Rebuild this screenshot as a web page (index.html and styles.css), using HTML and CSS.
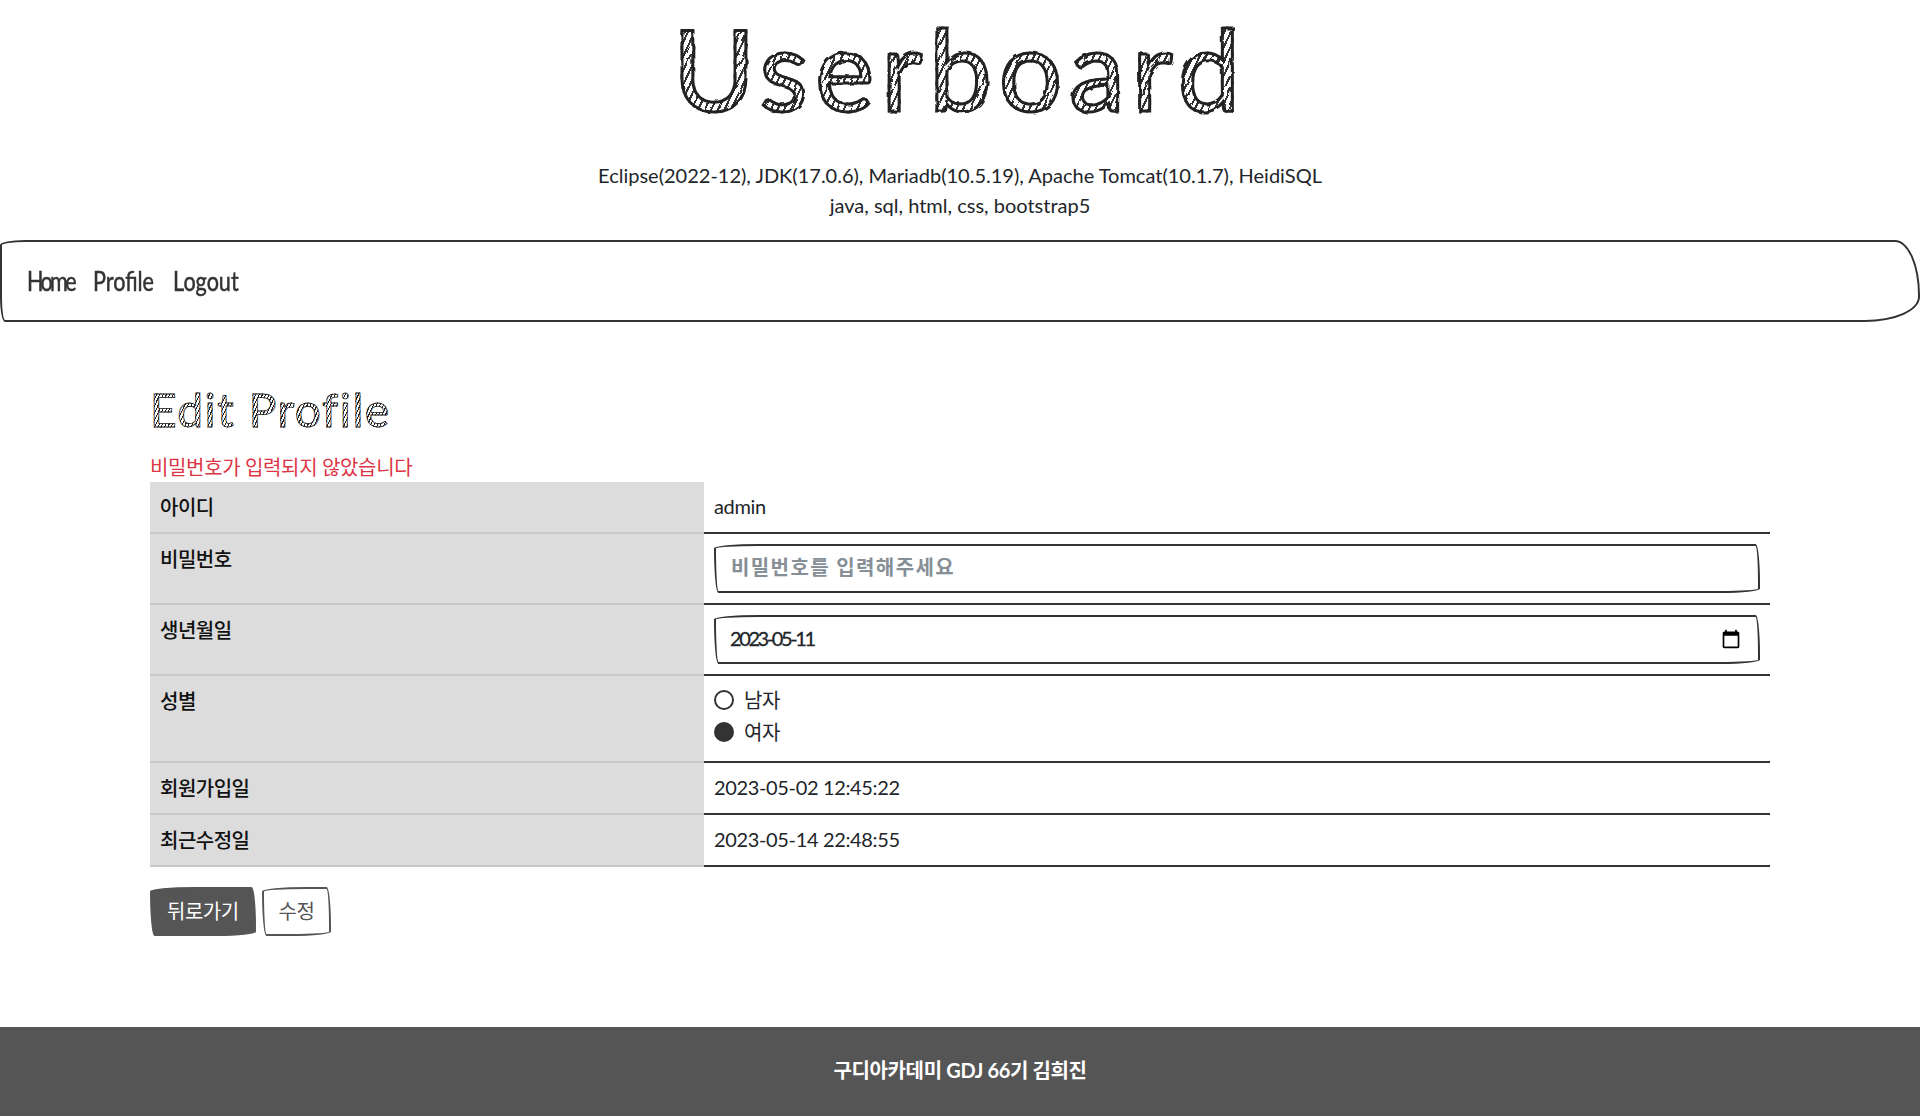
FILE: index.html
```html
<!DOCTYPE html>
<html>
<head>
    <title>Userboard - Edit Profile</title>
    <link rel="stylesheet" href="styles.css">
</head>
<body>
    <!-- rough edge for the sketch headings -->
    <svg class="svg-defs" width="0" height="0">
        <filter id="rough">
            <feTurbulence type="fractalNoise" baseFrequency="0.09" numOctaves="2" seed="4"/>
            <feDisplacementMap in="SourceGraphic" scale="3"/>
        </filter>
    </svg>

    <header class="site-header">
        <h1 class="site-title">Userboard</h1>
        <p>Eclipse(2022-12), JDK(17.0.6), Mariadb(10.5.19), Apache Tomcat(10.1.7), HeidiSQL</p>
        <p>java, sql, html, css, bootstrap5</p>
    </header>

    <nav class="navbar">
        <div class="nav-links">
            <a href="#" class="nav-home">Home</a>
            <a href="#">Profile</a>
            <a href="#">Logout</a>
        </div>
    </nav>

    <main class="content">
        <h2 class="page-title">Edit Profile</h2>
        <div class="error-msg">비밀번호가 입력되지 않았습니다</div>
        <form>
            <table class="profile-table">
                <tr>
                    <th>아이디</th>
                    <td class="text-cell">admin</td>
                </tr>
                <tr>
                    <th>비밀번호</th>
                    <td><input type="password" class="form-input" placeholder="비밀번호를 입력해주세요"></td>
                </tr>
                <tr>
                    <th>생년월일</th>
                    <td>
                        <div class="date-field">
                            <input type="text" class="form-input date-input" value="2023-05-11">
                            <svg class="date-icon" viewBox="0 0 24 24" width="20" height="20">
                                <path d="M20 3h-1V1h-2v2H7V1H5v2H4c-1.1 0-2 .9-2 2v16c0 1.1.9 2 2 2h16c1.1 0 2-.9 2-2V5c0-1.1-.9-2-2-2zm0 18H4V8h16v13z"/>
                            </svg>
                        </div>
                    </td>
                </tr>
                <tr>
                    <th>성별</th>
                    <td class="gender-cell">
                        <label class="radio-row"><input type="radio" name="gender"> 남자</label>
                        <label class="radio-row"><input type="radio" name="gender" checked> 여자</label>
                    </td>
                </tr>
                <tr>
                    <th>회원가입일</th>
                    <td class="text-cell">2023-05-02 12:45:22</td>
                </tr>
                <tr>
                    <th>최근수정일</th>
                    <td class="text-cell">2023-05-14 22:48:55</td>
                </tr>
            </table>
            <div class="btn-row">
                <a href="#" class="btn btn-dark">뒤로가기</a>
                <button type="button" class="btn btn-outline">수정</button>
            </div>
        </form>
    </main>

    <footer class="site-footer">구디아카데미 GDJ 66기 김희진</footer>
</body>
</html>
```

FILE: styles.css
```css
* { box-sizing: border-box; }
body {
    margin: 0;
    font-family: "Lato", "Noto Sans CJK KR", sans-serif;
    font-size: 20px;
    line-height: 30px;
    color: #212529;
    background: #fff;
}
.svg-defs { display: block; }
.site-header {
    text-align: center;
    height: 240px;
}
.site-header p {
    margin: 0;
    font-size: 20px;
    line-height: 30px;
}
.site-title {
    margin: 0 0 20px;
    height: 140px;
    font-family: "Lato", sans-serif;
    font-size: 112px;
    line-height: 136px;
    font-weight: 400;
    letter-spacing: 7px;
    color: transparent;
    background: repeating-linear-gradient(115deg, #333 0 2px, #fff 2px 6px);
    -webkit-background-clip: text;
    background-clip: text;
    -webkit-text-stroke: 3px #222;
    filter: url(#rough);
}
.navbar {
    display: flex;
    align-items: center;
    height: 82px;
    padding: 0 25px;
    border: 2px solid #333;
    border-radius: 25px 25px 55px 5px / 5px 55px 25px 25px;
}
.nav-links {
    display: flex;
    gap: 23px;
    transform: scaleX(0.83);
    transform-origin: left center;
}
.nav-links a {
    font-size: 26px;
    color: #333;
    text-decoration: none;
    -webkit-text-stroke: 0.5px #333;
}
.nav-links .nav-home {
    letter-spacing: -3.2px;
}
.content {
    padding: 64px 150px 91px;
}
.page-title {
    margin: 0 0 18px;
    font-family: "Lato", sans-serif;
    font-size: 46px;
    line-height: 48px;
    font-weight: 400;
    letter-spacing: 1.6px;
    color: transparent;
    background: repeating-linear-gradient(115deg, #222 0 1px, #fff 1px 3px);
    -webkit-background-clip: text;
    background-clip: text;
    -webkit-text-stroke: 0.8px #222;
}
.error-msg {
    color: #dc3545;
    letter-spacing: -0.35px;
}
.profile-table {
    width: 100%;
    border-collapse: collapse;
    table-layout: fixed;
}
.profile-table th,
.profile-table td {
    padding: 10px;
    vertical-align: top;
    font-weight: 400;
    text-align: left;
}
.profile-table th {
    width: 554px;
    background: #dcdcdc;
    color: #111;
    font-weight: 500;
    letter-spacing: -0.5px;
    border-bottom: 2px solid #c8c8c8;
}
.profile-table td {
    letter-spacing: -0.35px;
    border-bottom: 2px solid #333;
}
.profile-table .text-cell {
    padding-top: 9px;
    padding-bottom: 11px;
}
.profile-table .gender-cell {
    padding-top: 8px;
    padding-bottom: 13px;
}
.form-input {
    display: block;
    width: 100%;
    height: 49px;
    padding: 0 15px 4px;
    font-family: inherit;
    font-size: 20px;
    color: #212529;
    background: #fff;
    border: 2px solid #333;
    border-radius: 255px 25px 225px 25px / 25px 225px 25px 255px;
    outline: none;
}
.form-input::placeholder {
    color: #868e96;
    font-weight: 700;
    letter-spacing: 1.4px;
}
.date-field {
    position: relative;
}
.date-input {
    padding-left: 14px;
    letter-spacing: -2.4px;
    -webkit-text-stroke: 0.3px #212529;
}
.date-icon {
    position: absolute;
    top: 14px;
    right: 19px;
}
.radio-row {
    display: flex;
    align-items: center;
    gap: 10px;
    height: 32px;
}
.radio-row input {
    appearance: none;
    width: 20px;
    height: 20px;
    margin: 0;
    border: 2px solid #333;
    border-radius: 50%;
    background: #fff;
}
.radio-row input:checked {
    background: #333;
}
.btn-row {
    display: flex;
    gap: 6px;
    margin-top: 20px;
}
.btn {
    display: inline-block;
    height: 49px;
    padding: 7px 15px 9px;
    font-family: inherit;
    font-size: 20px;
    line-height: 30px;
    letter-spacing: -0.5px;
    text-decoration: none;
    border: 2px solid #555;
    border-radius: 255px 25px 225px 25px / 25px 225px 25px 255px;
}
.btn-dark {
    background: #555;
    color: #fff;
}
.btn-outline {
    background: #fff;
    color: #555;
}
.site-footer {
    height: 90px;
    line-height: 86px;
    text-align: center;
    background: #555;
    color: #fff;
    font-weight: 700;
    letter-spacing: -0.35px;
}
```
